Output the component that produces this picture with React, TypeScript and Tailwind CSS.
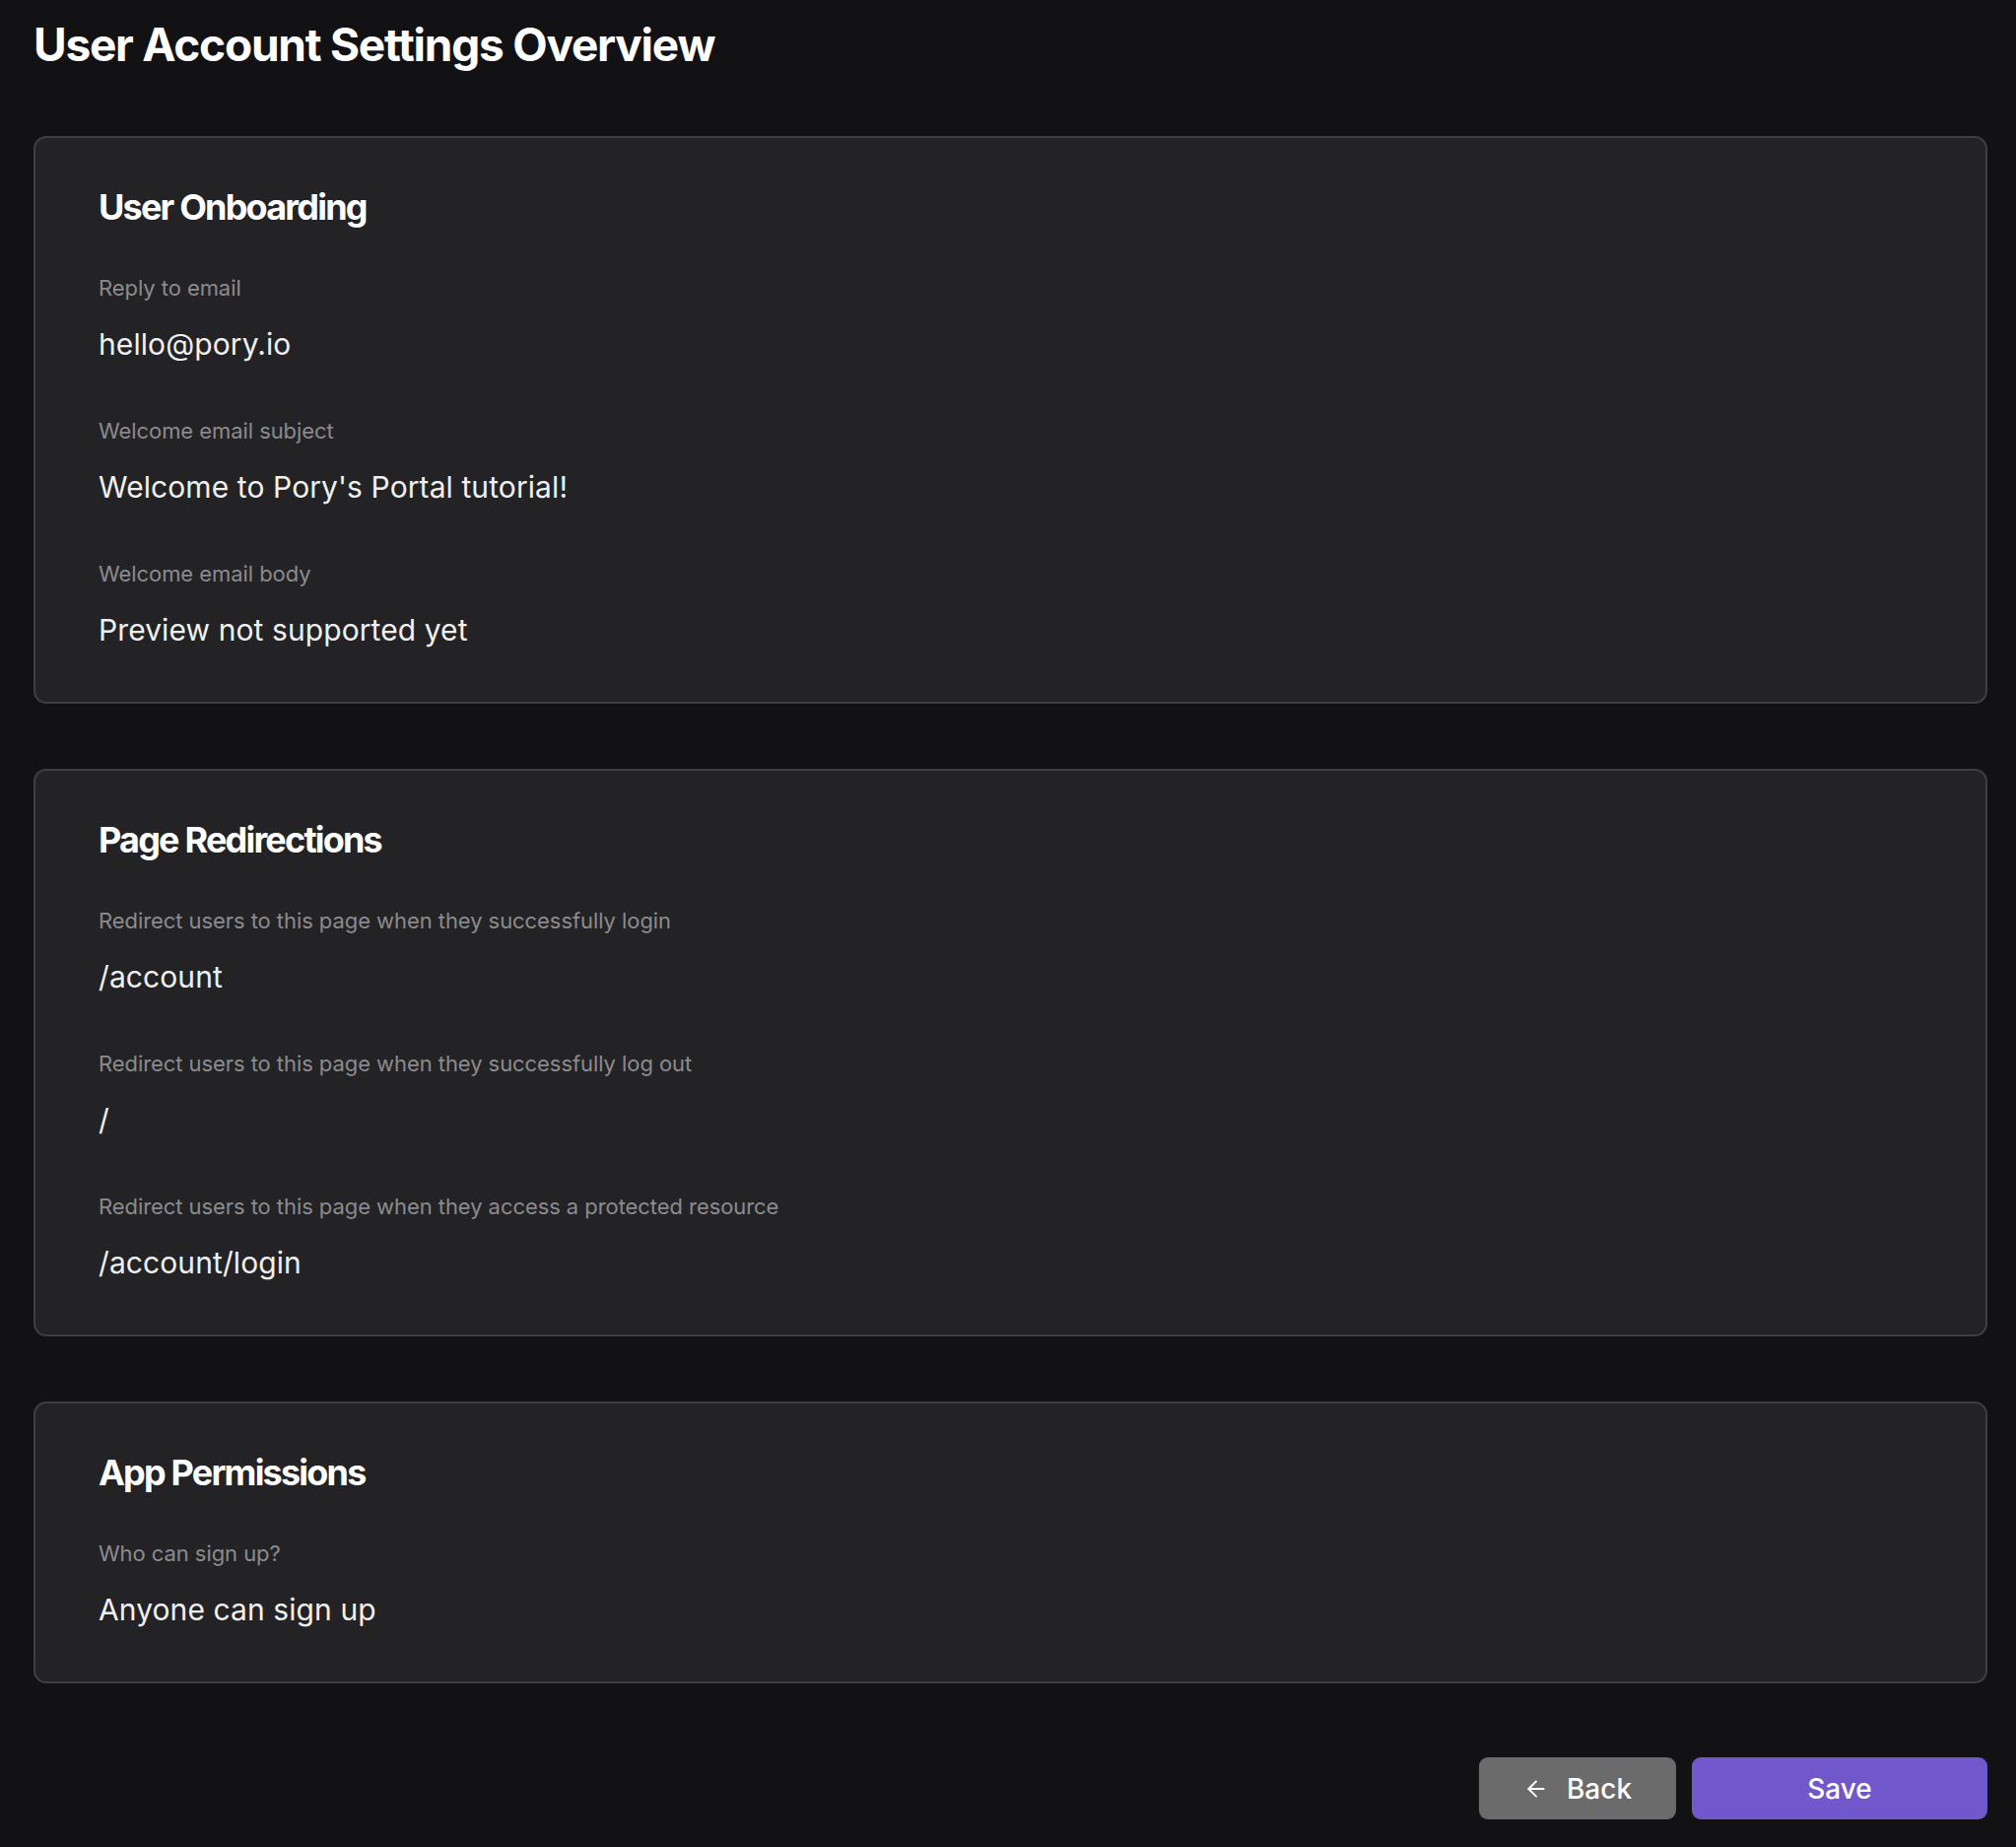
import React from "react";

type Field = { label: string; value: string };

function Card({ title, fields }: { title: string; fields: Field[] }) {
  return (
    <section className="rounded-[13px] border-2 border-[#3f3f42] bg-[#232325] pl-[64px] pr-[64px] pt-[49px] pb-[50px]">
      <h2 className="text-[36px] font-bold leading-[42px] tracking-[-0.05em] text-white">{title}</h2>
      <div className="mt-[45px] flex flex-col gap-[49px]">
        {fields.map((f) => (
          <div key={f.label} className="flex flex-col gap-[18px]">
            <div className="text-[22px] leading-[33px] tracking-[-0.003em] text-[#8b8b8f]">{f.label}</div>
            <div className="text-[30px] leading-[45px] tracking-[0.003em] text-[#f0f0f1]">{f.value}</div>
          </div>
        ))}
      </div>
    </section>
  );
}

export default function App() {
  return (
    <div
      className="min-h-screen bg-[#121214] pl-[34px] pr-[29px] pt-[17px] pb-[29px]"
      style={{ fontFamily: "Inter, 'Noto Sans', sans-serif" }}
    >
      <h1 className="text-[46px] font-bold leading-[56px] tracking-[-0.027em] text-white">
        User Account Settings Overview
      </h1>
      <div className="mt-[65px] flex flex-col gap-[66px]">
        <Card
          title="User Onboarding"
          fields={[
            { label: "Reply to email", value: "hello@pory.io" },
            { label: "Welcome email subject", value: "Welcome to Pory's Portal tutorial!" },
            { label: "Welcome email body", value: "Preview not supported yet" },
          ]}
        />
        <Card
          title="Page Redirections"
          fields={[
            { label: "Redirect users to this page when they successfully login", value: "/account" },
            { label: "Redirect users to this page when they successfully log out", value: "/" },
            { label: "Redirect users to this page when they access a protected resource", value: "/account/login" },
          ]}
        />
        <Card
          title="App Permissions"
          fields={[{ label: "Who can sign up?", value: "Anyone can sign up" }]}
        />
      </div>
      <div className="mt-[75px] flex justify-end gap-[16px]">
        <button className="flex h-[63px] w-[200px] items-center justify-center gap-[18px] rounded-[9px] bg-[#6b6b6b] text-[28px] font-medium text-white">
          <svg width="26" height="26" viewBox="0 0 24 24" fill="none" stroke="currentColor" strokeWidth="1.8" strokeLinecap="round" strokeLinejoin="round">
            <path d="M12 19l-7-7 7-7" />
            <path d="M19 12H5" />
          </svg>
          <span>Back</span>
        </button>
        <button className="flex h-[63px] w-[300px] items-center justify-center rounded-[9px] bg-[#7058cc] text-[28px] font-medium text-white">
          Save
        </button>
      </div>
    </div>
  );
}
